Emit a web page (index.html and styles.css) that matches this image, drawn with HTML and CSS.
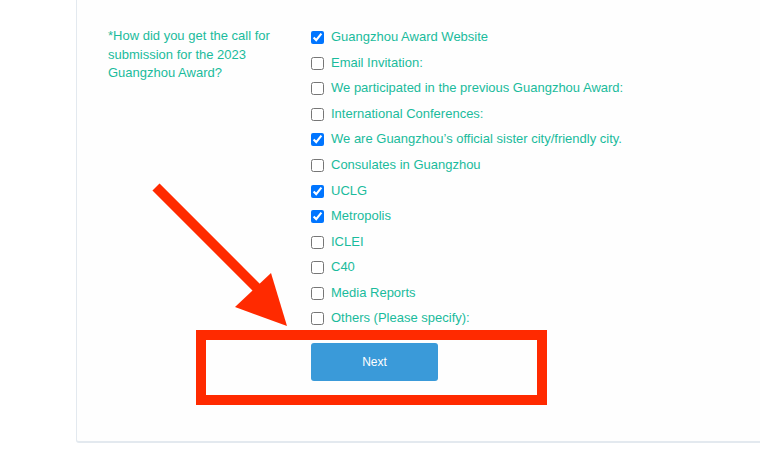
FILE: index.html
```html
<!DOCTYPE html>
<html>
<head>
<meta charset="utf-8">
<link rel="stylesheet" href="styles.css">
</head>
<body>
<div class="page">
  <div class="card">
    <div class="form-row">
      <div class="question">*How did you get the call for submission for the 2023 Guangzhou Award?</div>
      <div class="options">
        <label class="opt"><input type="checkbox" checked><span>Guangzhou Award Website</span></label>
        <label class="opt"><input type="checkbox"><span>Email Invitation:</span></label>
        <label class="opt"><input type="checkbox"><span>We participated in the previous Guangzhou Award:</span></label>
        <label class="opt"><input type="checkbox"><span>International Conferences:</span></label>
        <label class="opt"><input type="checkbox" checked><span>We are Guangzhou’s official sister city/friendly city.</span></label>
        <label class="opt"><input type="checkbox"><span>Consulates in Guangzhou</span></label>
        <label class="opt"><input type="checkbox" checked><span>UCLG</span></label>
        <label class="opt"><input type="checkbox" checked><span>Metropolis</span></label>
        <label class="opt"><input type="checkbox"><span>ICLEI</span></label>
        <label class="opt"><input type="checkbox"><span>C40</span></label>
        <label class="opt"><input type="checkbox"><span>Media Reports</span></label>
        <label class="opt"><input type="checkbox"><span>Others (Please specify):</span></label>
        <button class="next" type="button">Next</button>
      </div>
    </div>
  </div>
  <div class="highlight"></div>
  <svg class="arrow" width="760" height="455" viewBox="0 0 760 455">
    <line x1="156" y1="187" x2="258" y2="289" stroke="#ff2a00" stroke-width="10"/>
    <polygon points="235,307 271,273 287,326" fill="#ff2a00"/>
  </svg>
</div>
</body>
</html>
```
FILE: styles.css
```css
html, body {
  margin: 0;
  padding: 0;
  background: #ffffff;
}
.page {
  position: relative;
  width: 760px;
  height: 455px;
  overflow: hidden;
  font-family: "Liberation Sans", Arial, sans-serif;
}
.card {
  margin-left: 76px;
  width: 720px;
  height: 443px;
  border: 1px solid #e3e9ef;
  border-bottom-width: 2px;
  border-top: none;
  border-radius: 0 0 3px 3px;
  background: #fefefe;
  box-sizing: border-box;
  padding: 25px 0 0 31px;
}
.form-row {
  display: flex;
  gap: 18px;
}
.question {
  width: 185px;
  padding-top: 2px;
  font-size: 13px;
  line-height: 18.5px;
  color: #1abb9c;
}
.options {
  display: flex;
  flex-direction: column;
  align-items: flex-start;
}
.opt {
  display: flex;
  align-items: center;
  height: 25.55px;
  font-size: 13px;
  color: #1abb9c;
}
.opt input {
  margin: 0 7px 0 0;
  width: 13px;
  height: 13px;
}
.opt span {
  position: relative;
  top: -1px;
}
.next {
  margin-top: 11px;
  width: 127px;
  height: 38px;
  border: none;
  border-radius: 3px;
  background: #3a9ad9;
  color: #ffffff;
  font-family: "Liberation Sans", Arial, sans-serif;
  font-size: 12px;
}
.highlight {
  position: absolute;
  left: 196px;
  top: 330px;
  width: 351px;
  height: 75px;
  box-sizing: border-box;
  border: 10px solid #ff2a00;
}
.arrow {
  position: absolute;
  left: 0;
  top: 0;
}
```
